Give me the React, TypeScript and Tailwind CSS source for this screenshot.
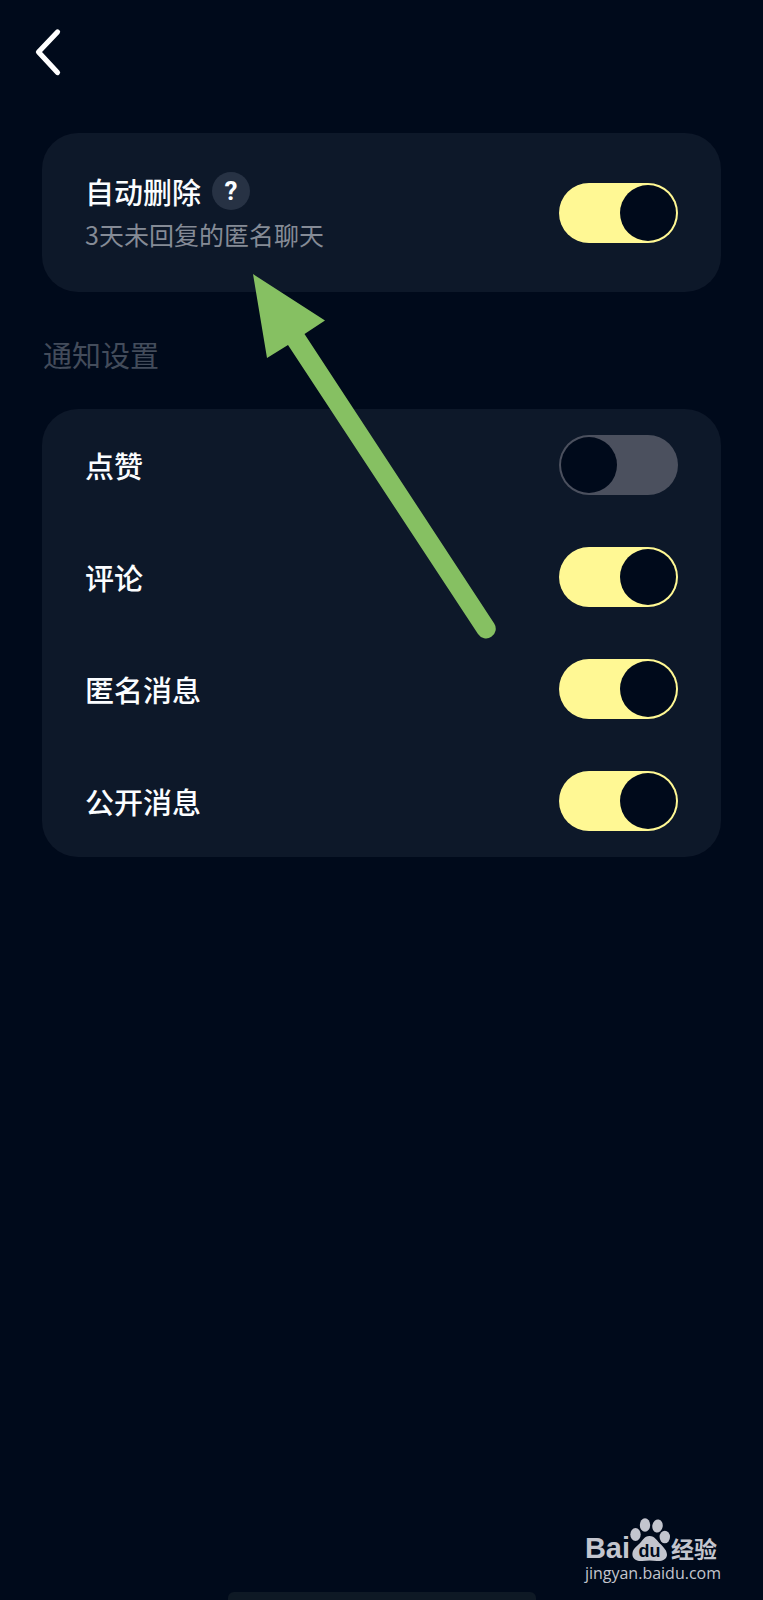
import { useState } from "react";

type SwitchProps = {
  id: string;
  checked: boolean;
  onChange: (checked: boolean) => void;
};

function Switch({ id, checked, onChange }: SwitchProps) {
  return (
    <span className="inline-grid h-[60px] w-[119px] shrink-0 items-center">
      <input
        id={id}
        type="checkbox"
        role="switch"
        checked={checked}
        onChange={(e) => onChange(e.target.checked)}
        className="peer col-start-1 row-start-1 h-[60px] w-[119px] cursor-pointer appearance-none rounded-full bg-[#4b505e] checked:bg-[#fff894]"
      />
      <span className="pointer-events-none col-start-1 row-start-1 ml-0.5 size-14 rounded-full bg-[#000a1b] peer-checked:ml-[61px]" />
    </span>
  );
}

const NOTIFICATIONS = [
  { id: "like", label: "点赞", on: false },
  { id: "comment", label: "评论", on: true },
  { id: "anonymous", label: "匿名消息", on: true },
  { id: "public", label: "公开消息", on: true },
];

/** Green pointer drawn over the two cards. */
function PointerArrow() {
  return (
    <svg
      aria-hidden="true"
      viewBox="0 0 245 366"
      className="pointer-events-none absolute left-[253px] top-[274px] h-[366px] w-[245px]"
    >
      <path
        d="M0 0L72 46.500L51.500 60L241.200 349.500A9.600 9.600 0 0 1 225 360L35 71L14 84Z"
        fill="#86c062"
      />
    </svg>
  );
}

function Watermark() {
  return (
    <div className="flex flex-col items-start text-[#c3c5ce]">
      <div className="flex items-end">
        <span className="font-['Liberation_Sans',sans-serif] text-[29px] font-bold leading-[30px]">Bai</span>
        <svg viewBox="0 0 40 45" className="h-[45px] w-10" aria-hidden="true">
          <g fill="#c3c5ce">
            <ellipse cx="5.500" cy="16.500" rx="5.200" ry="6.500" />
            <ellipse cx="15" cy="7" rx="5.200" ry="6.800" />
            <ellipse cx="27.500" cy="8" rx="5.200" ry="6.600" transform="rotate(10 27.500 8)" />
            <ellipse cx="34.800" cy="19" rx="5.200" ry="6.300" />
            <path d="M19.500 18C14 18 12.500 23 8.500 26.500C4 30.500 2 33 2.500 37.500C3.500 42 8 43.500 12 43C17 42.300 22 42.300 27 43C32 43.500 36.500 41.500 37 37C37 32.500 34 30 31 26.500C27 23 25 18 19.500 18Z" />
          </g>
          <text
            x="19.500"
            y="39"
            textAnchor="middle"
            fill="#000a1b"
            className="font-['Liberation_Sans',sans-serif] text-[18px] font-bold"
          >
            du
          </text>
        </svg>
        <span className="ml-px font-['Noto_Sans_CJK_SC',sans-serif] text-[23px] font-bold leading-[30px]">经验</span>
      </div>
      <span className="font-['Open_Sans',sans-serif] text-base font-medium leading-5">jingyan.baidu.com</span>
    </div>
  );
}

export default function App() {
  const [autoDelete, setAutoDelete] = useState(true);
  const [items, setItems] = useState(NOTIFICATIONS);

  const toggle = (id: string, on: boolean) =>
    setItems((prev) => prev.map((it) => (it.id === id ? { ...it, on } : it)));

  return (
    <div className="relative flex min-h-screen flex-col overflow-hidden bg-[#000a1b] font-['Noto_Sans_CJK_SC',sans-serif] text-[#fbfdff]">
      <header className="flex h-[133px] items-start px-6 pt-6">
        <button type="button" aria-label="返回" className="grid size-14 cursor-pointer place-items-center">
          <svg viewBox="0 0 56 56" className="size-14" fill="none" aria-hidden="true">
            <path
              d="M33.500 8L14.500 28L33.500 48.500"
              stroke="#fff"
              strokeWidth="5.200"
              strokeLinecap="round"
              strokeLinejoin="round"
            />
          </svg>
        </button>
      </header>

      <main className="px-[42px]">
        <section className="flex items-center justify-between rounded-[36px] bg-[#0d1829] px-[43px] pb-9 pt-9">
          <div>
            <div className="flex items-center gap-[11px]">
              <label htmlFor="auto-delete" className="text-[29px] font-medium leading-[44px]">
                自动删除
              </label>
              <button
                type="button"
                aria-label="说明"
                className="grid size-[38px] cursor-pointer place-items-center rounded-full bg-[#273244] font-['Roboto',sans-serif] text-[26px] font-bold leading-none"
              >
                ?
              </button>
            </div>
            <p className="text-[25px] leading-[43px] text-[#858b96]">3天未回复的匿名聊天</p>
          </div>
          <Switch id="auto-delete" checked={autoDelete} onChange={setAutoDelete} />
        </section>

        <h2 className="pb-8 pl-px pt-10 text-[29px] leading-[45px] text-[#434c5b]">通知设置</h2>

        <ul className="rounded-[36px] bg-[#0d1829] px-[43px]">
          {items.map((it) => (
            <li key={it.id} className="flex h-28 items-center justify-between">
              <label htmlFor={it.id} className="text-[29px] font-medium leading-[42px]">
                {it.label}
              </label>
              <Switch id={it.id} checked={it.on} onChange={(on) => toggle(it.id, on)} />
            </li>
          ))}
        </ul>
      </main>

      <PointerArrow />

      <footer className="mt-auto">
        <div className="flex justify-end pb-[9px] pr-[42px]">
          <Watermark />
        </div>
        <div className="mx-auto h-2 w-[308px] rounded-t-md bg-[#0e1925]" />
      </footer>
    </div>
  );
}
